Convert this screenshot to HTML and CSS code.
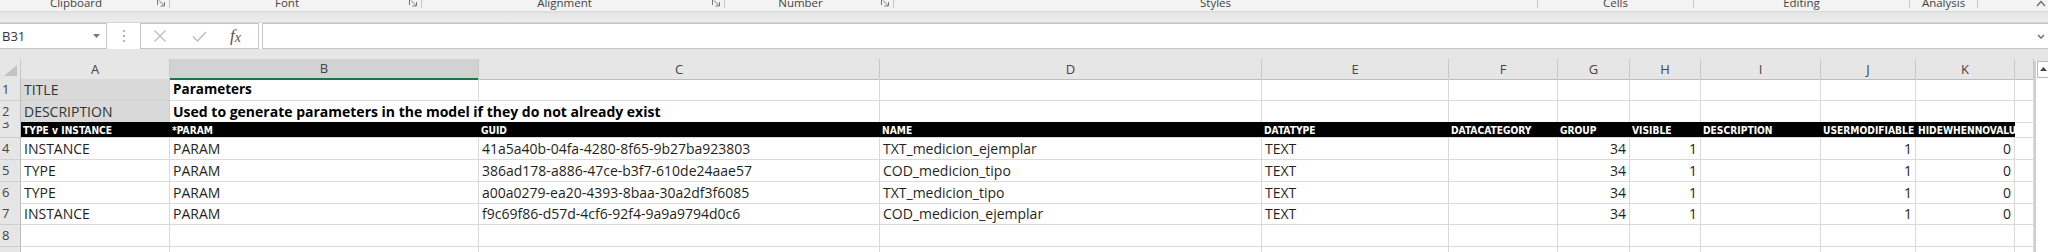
FILE: index.html
```html
<!DOCTYPE html>
<html lang="en">
<head>
    <meta charset="UTF-8">
    <meta name="viewport" content="width=device-width, initial-scale=1.0">
    <title>Parameters - Excel</title>
    <link rel="stylesheet" href="styles.css">
</head>
<body>
    <!-- bottom edge of the ribbon: group captions -->
    <div class="ribbon-foot">
        <div class="group has-launcher w-clipboard">
            <span class="caption">Clipboard</span>
            <svg class="launcher" width="10" height="8" viewBox="0 0 10 8"><path d="M1.5 0v6M3 1.5l5 5M8.5 3v4h-4" fill="none" stroke="#777"/></svg>
        </div>
        <div class="group has-launcher w-font">
            <span class="caption">Font</span>
            <svg class="launcher" width="10" height="8" viewBox="0 0 10 8"><path d="M1.5 0v6M3 1.5l5 5M8.5 3v4h-4" fill="none" stroke="#777"/></svg>
        </div>
        <div class="group has-launcher w-alignment">
            <span class="caption">Alignment</span>
            <svg class="launcher" width="10" height="8" viewBox="0 0 10 8"><path d="M1.5 0v6M3 1.5l5 5M8.5 3v4h-4" fill="none" stroke="#777"/></svg>
        </div>
        <div class="group has-launcher w-number">
            <span class="caption">Number</span>
            <svg class="launcher" width="10" height="8" viewBox="0 0 10 8"><path d="M1.5 0v6M3 1.5l5 5M8.5 3v4h-4" fill="none" stroke="#777"/></svg>
        </div>
        <div class="group w-styles"><span class="caption">Styles</span></div>
        <div class="group w-cells"><span class="caption">Cells</span></div>
        <div class="group w-editing"><span class="caption">Editing</span></div>
        <div class="group w-analysis"><span class="caption">Analysis</span></div>
        <div class="ribbon-rest">
            <svg width="10" height="7" viewBox="0 0 10 7"><path d="M1 6l4-4.5L9 6" fill="none" stroke="#666" stroke-width="1.2"/></svg>
        </div>
    </div>
    <div class="ribbon-shadow"></div>

    <!-- name box + formula bar -->
    <div class="formula-bar">
        <div class="name-box">
            <span>B31</span>
            <svg width="7" height="4" viewBox="0 0 7 4"><path d="M0 0h7L3.5 4z" fill="#777"/></svg>
        </div>
        <div class="grip">
            <svg width="2" height="12" viewBox="0 0 2 12"><rect y="0" width="2" height="2"/><rect y="5" width="2" height="2"/><rect y="10" width="2" height="2"/></svg>
        </div>
        <div class="fx-box">
            <svg width="14" height="12" viewBox="0 0 14 12"><path d="M1.5 0.5l11 11M12.5 0.5l-11 11" stroke="#bbb" stroke-width="1.2"/></svg>
            <svg class="check" width="15" height="11" viewBox="0 0 15 11"><path d="M1 5.5l4.5 4.5L14 1" fill="none" stroke="#bbb" stroke-width="1.4"/></svg>
            <span class="fx">f<span class="fx-x">x</span></span>
        </div>
        <div class="formula-input">
            <svg width="8" height="5" viewBox="0 0 8 5"><path d="M1 1l3 3 3-3" fill="none" stroke="#666" stroke-width="1.3"/></svg>
        </div>
    </div>

    <!-- worksheet -->
    <div class="workbook">
        <div class="sheet">
            <div class="row col-heads">
                <div class="corner"><svg width="13" height="11" viewBox="0 0 13 11"><polygon points="13,0 13,11 0,11" fill="#c2c2c2"/></svg></div>
                <div class="col-head">A</div>
                <div class="col-head selected">B</div>
                <div class="col-head">C</div>
                <div class="col-head">D</div>
                <div class="col-head">E</div>
                <div class="col-head">F</div>
                <div class="col-head">G</div>
                <div class="col-head">H</div>
                <div class="col-head">I</div>
                <div class="col-head">J</div>
                <div class="col-head">K</div>
                <div class="col-head"></div>
            </div>

            <div class="row h22">
                <div class="row-head">1</div>
                <div class="cell shaded">TITLE</div>
                <div class="cell bold">Parameters</div>
                <div class="cell"></div><div class="cell"></div><div class="cell"></div><div class="cell"></div>
                <div class="cell"></div><div class="cell"></div><div class="cell"></div><div class="cell"></div>
                <div class="cell"></div><div class="cell"></div>
            </div>
            <div class="row h21">
                <div class="row-head">2</div>
                <div class="cell shaded">DESCRIPTION</div>
                <div class="cell bold spill">Used to generate parameters in the model if they do not already exist</div>
                <div class="cell"></div><div class="cell"></div><div class="cell"></div><div class="cell"></div>
                <div class="cell"></div><div class="cell"></div><div class="cell"></div><div class="cell"></div>
                <div class="cell"></div><div class="cell"></div>
            </div>
            <div class="row fields">
                <div class="row-head">3</div>
                <div class="field">TYPE v INSTANCE</div>
                <div class="field">*PARAM</div>
                <div class="field">GUID</div>
                <div class="field">NAME</div>
                <div class="field">DATATYPE</div>
                <div class="field">DATACATEGORY</div>
                <div class="field">GROUP</div>
                <div class="field">VISIBLE</div>
                <div class="field">DESCRIPTION</div>
                <div class="field">USERMODIFIABLE</div>
                <div class="field">HIDEWHENNOVALUE</div>
                <div class="cell"></div>
            </div>
            <div class="row h22">
                <div class="row-head">4</div>
                <div class="cell">INSTANCE</div>
                <div class="cell">PARAM</div>
                <div class="cell">41a5a40b-04fa-4280-8f65-9b27ba923803</div>
                <div class="cell">TXT_medicion_ejemplar</div>
                <div class="cell">TEXT</div>
                <div class="cell"></div>
                <div class="cell num">34</div>
                <div class="cell num">1</div>
                <div class="cell"></div>
                <div class="cell num">1</div>
                <div class="cell num">0</div>
                <div class="cell"></div>
            </div>
            <div class="row h22">
                <div class="row-head">5</div>
                <div class="cell">TYPE</div>
                <div class="cell">PARAM</div>
                <div class="cell">386ad178-a886-47ce-b3f7-610de24aae57</div>
                <div class="cell">COD_medicion_tipo</div>
                <div class="cell">TEXT</div>
                <div class="cell"></div>
                <div class="cell num">34</div>
                <div class="cell num">1</div>
                <div class="cell"></div>
                <div class="cell num">1</div>
                <div class="cell num">0</div>
                <div class="cell"></div>
            </div>
            <div class="row h21">
                <div class="row-head">6</div>
                <div class="cell">TYPE</div>
                <div class="cell">PARAM</div>
                <div class="cell">a00a0279-ea20-4393-8baa-30a2df3f6085</div>
                <div class="cell">TXT_medicion_tipo</div>
                <div class="cell">TEXT</div>
                <div class="cell"></div>
                <div class="cell num">34</div>
                <div class="cell num">1</div>
                <div class="cell"></div>
                <div class="cell num">1</div>
                <div class="cell num">0</div>
                <div class="cell"></div>
            </div>
            <div class="row h22">
                <div class="row-head">7</div>
                <div class="cell">INSTANCE</div>
                <div class="cell">PARAM</div>
                <div class="cell">f9c69f86-d57d-4cf6-92f4-9a9a9794d0c6</div>
                <div class="cell">COD_medicion_ejemplar</div>
                <div class="cell">TEXT</div>
                <div class="cell"></div>
                <div class="cell num">34</div>
                <div class="cell num">1</div>
                <div class="cell"></div>
                <div class="cell num">1</div>
                <div class="cell num">0</div>
                <div class="cell"></div>
            </div>
            <div class="row h22">
                <div class="row-head">8</div>
                <div class="cell"></div><div class="cell"></div><div class="cell"></div><div class="cell"></div>
                <div class="cell"></div><div class="cell"></div><div class="cell"></div><div class="cell"></div>
                <div class="cell"></div><div class="cell"></div><div class="cell"></div><div class="cell"></div>
            </div>
            <div class="row h22">
                <div class="row-head">9</div>
                <div class="cell"></div><div class="cell"></div><div class="cell"></div><div class="cell"></div>
                <div class="cell"></div><div class="cell"></div><div class="cell"></div><div class="cell"></div>
                <div class="cell"></div><div class="cell"></div><div class="cell"></div><div class="cell"></div>
            </div>
        </div>
        <div class="vscroll">
            <div class="vscroll-up">
                <svg width="7" height="4" viewBox="0 0 7 4"><path d="M3.5 0L7 4H0z" fill="#444"/></svg>
            </div>
        </div>
    </div>
</body>
</html>
```

FILE: styles.css
```css
body {
    margin: 0;
    width: 2048px;
    height: 252px;
    overflow: hidden;
    font-family: "Open Sans", "Liberation Sans", sans-serif;
    color: #1f1f1f;
    background-color: #fff;
}

/* ribbon captions */
.ribbon-foot {
    display: flex;
    height: 11px;
    overflow: hidden;
    background-color: #f3f3f3;
    font-size: 11.5px;
    color: #444;
}
.group {
    display: grid;
    grid-template-columns: 1fr;
    align-self: flex-start;
    height: 8px;
    border-right: 1px solid #c8c8c8;
    box-sizing: border-box;
}
.group.has-launcher {
    grid-template-columns: 1fr 17px;
}
.caption {
    justify-self: center;
    margin-top: -3px;
    line-height: 11px;
    white-space: nowrap;
}
.launcher {
    margin: -1px 0 0 4px;
}
.w-clipboard { width: 170px; }
.w-font { width: 252px; }
.w-alignment { width: 303px; }
.w-number { width: 169px; }
.w-styles { width: 644px; }
.w-cells { width: 156px; }
.w-editing { width: 216px; }
.w-analysis { width: 68px; }
.ribbon-rest {
    flex: 1;
    display: flex;
    justify-content: flex-end;
    padding-right: 2px;
}

.ribbon-shadow {
    height: 11px;
    background: linear-gradient(#d6d6d6 0, #e6e6e6 2px, #ececec 100%);
}

/* formula bar */
.formula-bar {
    display: flex;
    height: 27px;
    box-sizing: border-box;
    border-top: 1px solid #d6d6d6;
    background-color: #fff;
}
.name-box, .fx-box, .formula-input {
    display: flex;
    align-items: center;
    box-sizing: border-box;
    border: 1px solid #c6c6c6;
    background-color: #fff;
}
.name-box {
    width: 107px;
    border-left: none;
    padding: 0 6px 0 2px;
    justify-content: space-between;
    font-size: 13px;
    color: #333;
}
.grip {
    width: 33px;
    display: flex;
    align-items: center;
    justify-content: center;
    fill: #b4b4b4;
}
.fx-box {
    width: 119px;
    padding-left: 12px;
}
.fx-box .check {
    margin-left: 25px;
}
.fx {
    margin-left: 23px;
    font-family: "Liberation Serif", serif;
    font-style: italic;
    font-size: 17px;
    color: #555;
    line-height: 1;
}
.fx-x {
    font-size: 14px;
    vertical-align: -1px;
}
.formula-input {
    flex: 1;
    margin-left: 3px;
    border-right: none;
    justify-content: flex-end;
    padding-right: 3px;
}

/* worksheet */
.workbook {
    display: flex;
    padding-top: 10px;
    background-color: #e6e6e6;
}
.sheet {
    width: 2034px;
    background-color: #fff;
}
.row {
    display: grid;
    grid-template-columns: 21px 149px 309px 401px 382px 187px 109px 72px 71px 120px 95px 99px 19px;
}
.h22 { height: 22px; }
.h21 { height: 21px; }

.col-heads {
    height: 20px;
    background-color: #e6e6e6;
}
.corner, .col-head {
    box-sizing: border-box;
    border-right: 1px solid #c8c8c8;
    border-bottom: 1px solid #bdbdbd;
}
.corner {
    display: flex;
    padding: 6px 0 0 4px;
}
.col-head {
    display: flex;
    align-items: center;
    justify-content: center;
    font-size: 13px;
    line-height: 19px;
    color: #444;
}
.col-head.selected {
    background-color: #d2d2d2;
    border-bottom: 2px solid #217346;
}

.row-head, .cell, .field {
    display: flex;
    align-items: flex-end;
    box-sizing: border-box;
    white-space: nowrap;
}
.row-head {
    padding-left: 2px;
    background-color: #e6e6e6;
    border-right: 1px solid #bdbdbd;
    border-bottom: 1px solid #cfcfcf;
    font-size: 13px;
    line-height: 21px;
    color: #444;
}
.cell {
    padding: 0 3px;
    border-right: 1px solid #dadada;
    border-bottom: 1px solid #dadada;
    font-size: 14px;
    line-height: 21px;
}
.cell.shaded {
    background-color: #d9d9d9;
    border-color: #d0d0d0;
    color: #333;
}
.cell.bold {
    font-weight: bold;
    color: #000;
    font-size: 13.5px;
}
.cell.spill {
    border-right-color: transparent;
    font-size: 14px;
}
.cell.num {
    justify-content: flex-end;
    padding-right: 3px;
}

/* black field-name row */
.fields {
    height: 16px;
}
.fields .row-head {
    align-items: flex-start;
    line-height: 2px;
    overflow: hidden;
}
.field {
    overflow: hidden;
    padding-left: 2px;
    background-color: #000;
    border-bottom: 1px solid #dadada;
    font-family: "Liberation Sans Narrow", "Arial Narrow", "DejaVu Sans Condensed", sans-serif;
    font-weight: bold;
    font-size: 10.2px;
    line-height: 12px;
    color: #fff;
}

.vscroll {
    width: 14px;
    margin-top: 2px;
    box-sizing: border-box;
    border-left: 2px solid #cfcfcf;
    background-color: #fff;
}
.vscroll-up {
    display: flex;
    justify-content: center;
    height: 17px;
    padding-top: 5px;
    box-sizing: border-box;
    margin-left: 1px;
    border-top: 1px solid #b9b9b9;
    border-left: 1px solid #b9b9b9;
    border-bottom: 1px solid #b9b9b9;
}
```
